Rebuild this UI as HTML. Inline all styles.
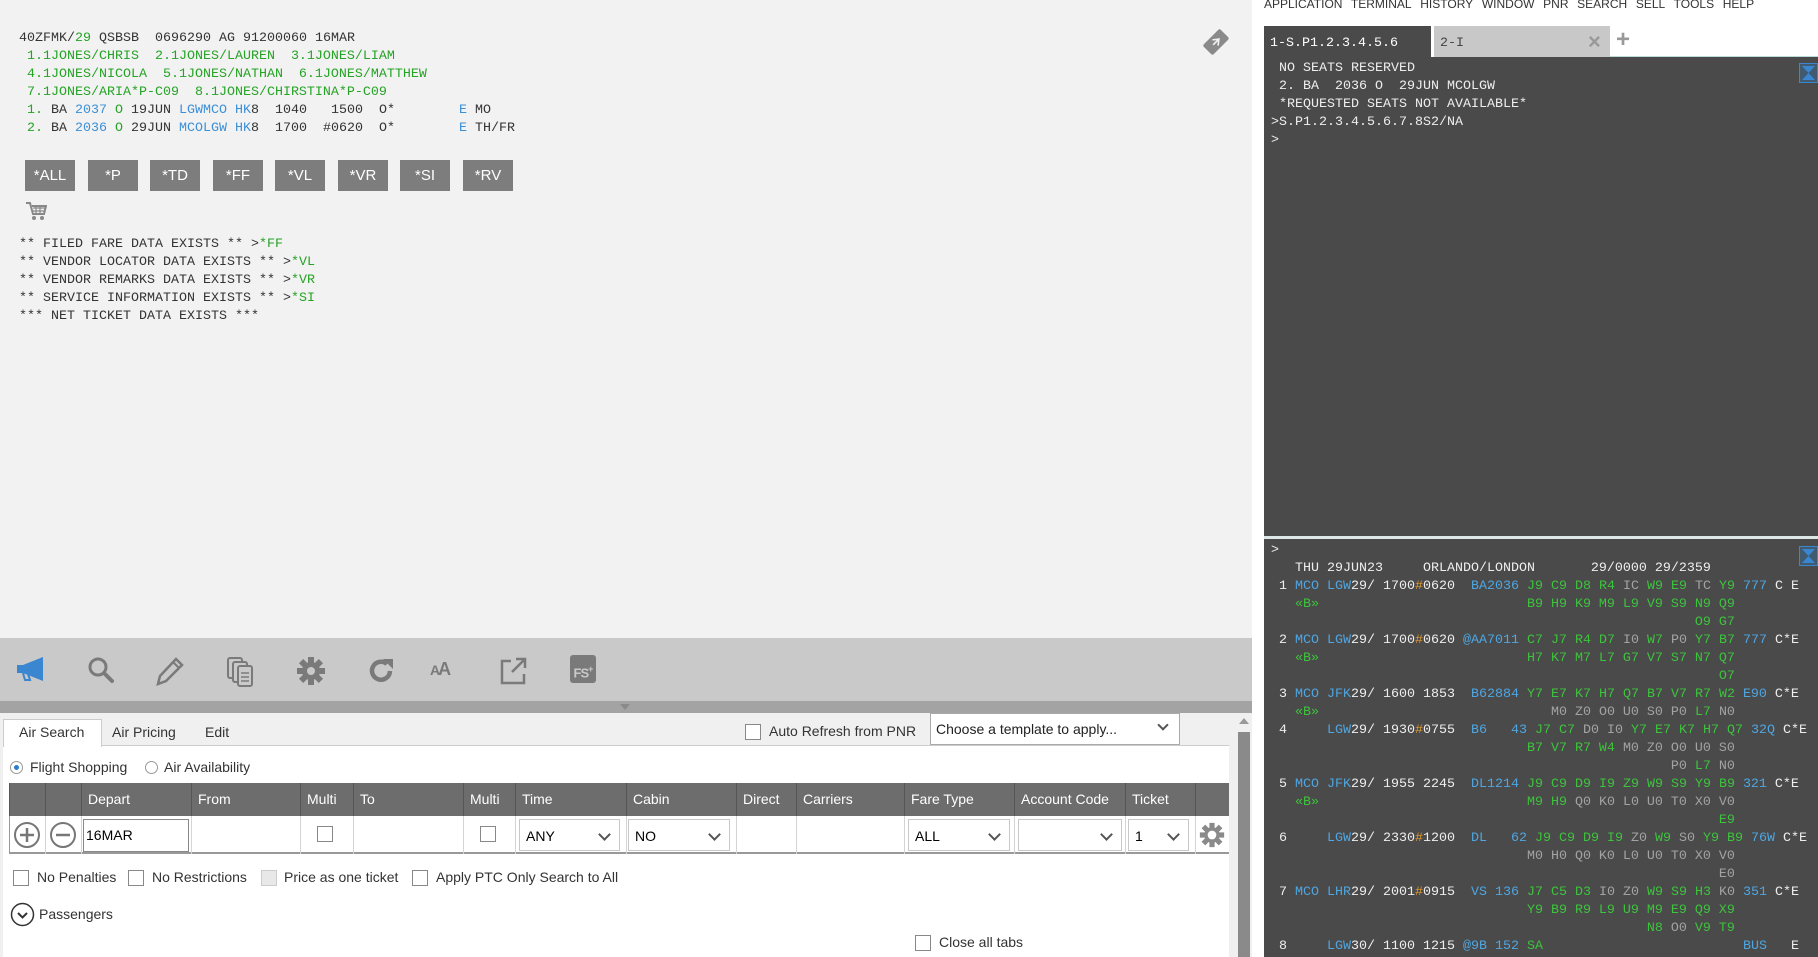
<!DOCTYPE html>
<html><head><meta charset="utf-8"><style>
*{margin:0;padding:0;box-sizing:border-box}
body{width:1818px;height:957px;overflow:hidden;background:#fff;position:relative;font-family:"Liberation Sans",sans-serif}
.a{position:absolute}
pre{font-family:"Liberation Mono",monospace;font-size:13.33px;line-height:18px;position:absolute;white-space:pre}
bl{color:#3b8fd6}gr{color:#25a325}gy{color:#9a9a9a}or{color:#e39a2c}
.rt bl{color:#4ea6e2}.rt gr{color:#3cc43c}.rt gy{color:#a3a3a3}
.btn{position:absolute;top:160px;width:50px;height:31px;background:#7d7d7d;color:#fff;font-size:15px;text-align:center;line-height:31px}
.tb{position:absolute;top:656px}
.hc{position:absolute;top:783px;height:33px;background:#6d6d6d;border-left:1px solid #555;color:#fff;font-size:14px;line-height:33px;padding-left:6px}
.rc{position:absolute;top:816px;height:38px;border-left:1px solid #d4d4d4;background:#fff}
.cb{position:absolute;width:16px;height:16px;border:1px solid #888;background:#fff}
.sel{position:absolute;top:819px;height:32px;border:1px solid #c8c8c8;background:#fff;font-size:14px;line-height:32px;padding-left:6px}
.sel:after{content:"";position:absolute;right:10px;top:10px;width:7px;height:7px;border-right:2px solid #555;border-bottom:2px solid #555;transform:rotate(45deg)}
.lbl{position:absolute;font-size:14px;color:#333}
</style></head><body>
<!-- left terminal -->
<div class="a" style="left:0;top:0;width:1252px;height:638px;background:#f2f2f2"></div>
<pre style="left:19px;top:30px;color:#333">40ZFMK/<gr>29</gr> QSBSB  0696290 AG 91200060 16MAR
<gr> 1.1JONES/CHRIS  2.1JONES/LAUREN  3.1JONES/LIAM</gr>
<gr> 4.1JONES/NICOLA  5.1JONES/NATHAN  6.1JONES/MATTHEW</gr>
<gr> 7.1JONES/ARIA*P-C09  8.1JONES/CHIRSTINA*P-C09</gr>
<gr> 1.</gr> BA <bl>2037</bl> <gr>O</gr> 19JUN <bl>LGWMCO</bl> <bl>HK</bl>8  1040   1500  O*        <bl>E</bl> MO
<gr> 2.</gr> BA <bl>2036</bl> <gr>O</gr> 29JUN <bl>MCOLGW</bl> <bl>HK</bl>8  1700  #0620  O*        <bl>E</bl> TH/FR</pre>
<div class="btn" style="left:25px">*ALL</div><div class="btn" style="left:88px">*P</div><div class="btn" style="left:150px">*TD</div><div class="btn" style="left:213px">*FF</div><div class="btn" style="left:275px">*VL</div><div class="btn" style="left:338px">*VR</div><div class="btn" style="left:400px">*SI</div><div class="btn" style="left:463px">*RV</div>
<svg class="a" style="left:25px;top:201px" width="22" height="21" viewBox="0 0 22 21"><path d="M1 2h4l3 11h11l2-8H7" fill="none" stroke="#888" stroke-width="2"/><path d="M8 7h12M8 10h11M11 5v8M15 5v8" stroke="#888" stroke-width="1.2"/><circle cx="9" cy="17" r="2" fill="#888"/><circle cx="17" cy="17" r="2" fill="#888"/></svg>
<pre style="left:19px;top:236px;color:#333">** FILED FARE DATA EXISTS ** &gt;<gr>*FF</gr>
** VENDOR LOCATOR DATA EXISTS ** &gt;<gr>*VL</gr>
** VENDOR REMARKS DATA EXISTS ** &gt;<gr>*VR</gr>
** SERVICE INFORMATION EXISTS ** &gt;<gr>*SI</gr>
*** NET TICKET DATA EXISTS ***</pre>
<svg class="a" style="left:1200px;top:26px" width="32" height="32" viewBox="0 0 32 32"><g transform="rotate(-45 16 16)"><rect x="4" y="9" width="24" height="14" rx="2" fill="#8a8a8a"/><path d="M15 12l5 4-5 4M12 16h9" stroke="#f2f2f2" stroke-width="1.6" fill="none"/></g></svg>

<!-- toolbar -->
<div class="a" style="left:0;top:638px;width:1252px;height:63px;background:#c9c9c9"></div>
<div class="a" style="left:0;top:701px;width:1252px;height:12px;background:#a3a3a3"></div>
<div class="a" style="left:620px;top:704px;width:0;height:0;border-left:5px solid transparent;border-right:5px solid transparent;border-top:6px solid #8a8a8a"></div>
<svg class="tb" style="left:15px" width="32" height="28" viewBox="0 0 32 28"><path d="M2 9h6l20-8v24L8 17H2z" fill="#3a86d0"/><path d="M8 17l2 7h5l-2-6" fill="none" stroke="#3a86d0" stroke-width="2"/></svg>
<svg class="tb" style="left:86px" width="30" height="30" viewBox="0 0 30 30"><circle cx="12" cy="11" r="8" fill="none" stroke="#7a7a7a" stroke-width="3"/><path d="M18 17l8 8" stroke="#7a7a7a" stroke-width="4" stroke-linecap="round"/></svg>
<svg class="tb" style="left:156px" width="30" height="30" viewBox="0 0 30 30"><path d="M20 3l6 6L10 25l-8 3 2-8z" fill="none" stroke="#7a7a7a" stroke-width="2.5"/><path d="M17 6l6 6" stroke="#7a7a7a" stroke-width="2"/></svg>
<svg class="tb" style="left:226px" width="30" height="32" viewBox="0 0 30 32"><rect x="2" y="2" width="14" height="20" rx="2" fill="none" stroke="#7a7a7a" stroke-width="2"/><rect x="7" y="6" width="14" height="20" rx="2" fill="#c9c9c9" stroke="#7a7a7a" stroke-width="2"/><rect x="12" y="10" width="14" height="20" rx="2" fill="#c9c9c9" stroke="#7a7a7a" stroke-width="2"/><path d="M15 17h8M15 21h8M15 25h8" stroke="#7a7a7a" stroke-width="1.6"/></svg>
<svg class="tb" style="left:296px" width="30" height="30" viewBox="0 0 30 30"><g fill="#7a7a7a"><circle cx="15" cy="15" r="9"/><rect x="12" y="1" width="6" height="28"/><rect x="12" y="1" width="6" height="28" transform="rotate(45 15 15)"/><rect x="12" y="1" width="6" height="28" transform="rotate(90 15 15)"/><rect x="12" y="1" width="6" height="28" transform="rotate(135 15 15)"/></g><circle cx="15" cy="15" r="4" fill="#c9c9c9"/></svg>
<svg class="tb" style="left:366px" width="30" height="30" viewBox="0 0 30 30"><path d="M24 15a9 9 0 1 1-3-7" fill="none" stroke="#7a7a7a" stroke-width="4.5"/><path d="M17 3h10v10z" fill="#7a7a7a"/></svg>
<div class="tb" style="left:430px;top:659px;font-size:18px;font-weight:bold;color:#7a7a7a;letter-spacing:-2px"><span style="font-size:14px">A</span>A</div>
<svg class="tb" style="left:498px" width="30" height="30" viewBox="0 0 30 30"><path d="M13 5H4v22h22v-9" fill="none" stroke="#7a7a7a" stroke-width="2.5"/><path d="M14 16L27 3M18 3h9v9" fill="none" stroke="#7a7a7a" stroke-width="2.5"/></svg>
<div class="tb" style="left:570px;top:655px;width:26px;height:28px;background:#7a7a7a;border-radius:3px;color:#c9c9c9;font-size:13px;font-weight:bold;line-height:28px;text-align:center;letter-spacing:-1px">FS<sup style="font-size:9px">+</sup></div>

<!-- form -->
<div class="a" style="left:0;top:713px;width:1252px;height:244px;background:#f0f0f0"></div>
<div class="a" style="left:3px;top:745px;width:1226px;height:212px;background:#fff;border-top:1px solid #ccc"></div>
<div class="a" style="left:3px;top:719px;width:99px;height:28px;background:#fff;border:1px solid #ccc;border-bottom:none"></div>
<div class="lbl" style="left:19px;top:724px">Air Search</div>
<div class="lbl" style="left:112px;top:724px">Air Pricing</div>
<div class="lbl" style="left:205px;top:724px">Edit</div>
<div class="cb" style="left:745px;top:724px"></div>
<div class="lbl" style="left:769px;top:723px">Auto Refresh from PNR</div>
<div class="a" style="left:930px;top:713px;width:250px;height:32px;background:#fff;border:1px solid #aaa;font-size:14px;line-height:30px;padding-left:5px;color:#222">Choose a template to apply...</div>
<div class="a" style="left:1159px;top:721px;width:8px;height:8px;border-right:2px solid #555;border-bottom:2px solid #555;transform:rotate(45deg)"></div>
<div class="a" style="left:1235px;top:713px;width:17px;height:244px;background:#f0f0f0"></div>
<div class="a" style="left:1238px;top:732px;width:12px;height:225px;background:#8a8a8a"></div>
<div class="a" style="left:1239px;top:718px;width:0;height:0;border-left:5px solid transparent;border-right:5px solid transparent;border-bottom:6px solid #999"></div>

<div class="a" style="left:10px;top:761px;width:13px;height:13px;border-radius:50%;border:1px solid #999;background:#fff"><div class="a" style="left:3px;top:3px;width:5px;height:5px;border-radius:50%;background:#2a7fd4"></div></div>
<div class="lbl" style="left:30px;top:759px">Flight Shopping</div>
<div class="a" style="left:145px;top:761px;width:13px;height:13px;border-radius:50%;border:1px solid #999;background:#fff"></div>
<div class="lbl" style="left:164px;top:759px">Air Availability</div>

<div class="hc" style="left:9px;width:36px"></div><div class="hc" style="left:45px;width:36px"></div><div class="hc" style="left:81px;width:110px">Depart</div><div class="hc" style="left:191px;width:109px">From</div><div class="hc" style="left:300px;width:53px">Multi</div><div class="hc" style="left:353px;width:110px">To</div><div class="hc" style="left:463px;width:52px">Multi</div><div class="hc" style="left:515px;width:111px">Time</div><div class="hc" style="left:626px;width:110px">Cabin</div><div class="hc" style="left:736px;width:60px">Direct</div><div class="hc" style="left:796px;width:108px">Carriers</div><div class="hc" style="left:904px;width:110px">Fare Type</div><div class="hc" style="left:1014px;width:111px">Account Code</div><div class="hc" style="left:1125px;width:70px">Ticket</div><div class="hc" style="left:1195px;width:34px"></div>
<div class="a" style="left:9px;top:816px;width:1220px;height:38px;background:#fff;border-bottom:2px solid #999;border-left:1px solid #999"></div>
<div class="rc" style="left:45px;width:1px"></div><div class="rc" style="left:81px;width:1px"></div><div class="rc" style="left:191px;width:1px"></div><div class="rc" style="left:300px;width:1px"></div><div class="rc" style="left:353px;width:1px"></div><div class="rc" style="left:463px;width:1px"></div><div class="rc" style="left:515px;width:1px"></div><div class="rc" style="left:626px;width:1px"></div><div class="rc" style="left:736px;width:1px"></div><div class="rc" style="left:796px;width:1px"></div><div class="rc" style="left:904px;width:1px"></div><div class="rc" style="left:1014px;width:1px"></div><div class="rc" style="left:1125px;width:1px"></div><div class="rc" style="left:1195px;width:1px"></div>
<svg class="a" style="left:13px;top:821px" width="28" height="28" viewBox="0 0 28 28"><circle cx="14" cy="14" r="12" fill="none" stroke="#777" stroke-width="2"/><path d="M14 7v14M7 14h14" stroke="#777" stroke-width="2.5"/></svg>
<svg class="a" style="left:49px;top:821px" width="28" height="28" viewBox="0 0 28 28"><circle cx="14" cy="14" r="12" fill="none" stroke="#777" stroke-width="2"/><path d="M7 14h14" stroke="#777" stroke-width="2.5"/></svg>
<div class="a" style="left:83px;top:819px;width:106px;height:33px;border:1px solid #888;background:#fff;font-size:14px;line-height:31px;padding-left:2px">16MAR</div>
<div class="cb" style="left:317px;top:826px"></div><div class="cb" style="left:480px;top:826px"></div>
<div class="sel" style="left:519px;width:101px">ANY</div>
<div class="sel" style="left:628px;width:102px">NO</div>
<div class="sel" style="left:908px;width:102px">ALL</div>
<div class="sel" style="left:1018px;width:104px"></div>
<div class="sel" style="left:1128px;width:61px">1</div>
<svg class="a" style="left:1199px;top:822px" width="26" height="26" viewBox="0 0 30 30"><g fill="#8a8a8a"><circle cx="15" cy="15" r="9"/><rect x="12" y="1" width="6" height="28"/><rect x="12" y="1" width="6" height="28" transform="rotate(45 15 15)"/><rect x="12" y="1" width="6" height="28" transform="rotate(90 15 15)"/><rect x="12" y="1" width="6" height="28" transform="rotate(135 15 15)"/></g><circle cx="15" cy="15" r="5" fill="#fff"/></svg>

<div class="cb" style="left:13px;top:870px"></div><div class="lbl" style="left:37px;top:869px">No Penalties</div>
<div class="cb" style="left:128px;top:870px"></div><div class="lbl" style="left:152px;top:869px">No Restrictions</div>
<div class="cb" style="left:261px;top:870px;background:#e8e8e8;border-color:#ccc"></div><div class="lbl" style="left:284px;top:869px">Price as one ticket</div>
<div class="cb" style="left:412px;top:870px"></div><div class="lbl" style="left:436px;top:869px">Apply PTC Only Search to All</div>
<svg class="a" style="left:10px;top:902px" width="25" height="25" viewBox="0 0 25 25"><circle cx="12.5" cy="12.5" r="11" fill="none" stroke="#333" stroke-width="1.5"/><path d="M8 11l4.5 4.5L17 11" fill="none" stroke="#333" stroke-width="2"/></svg>
<div class="lbl" style="left:39px;top:906px">Passengers</div>
<div class="cb" style="left:915px;top:935px"></div><div class="lbl" style="left:939px;top:934px">Close all tabs</div>

<!-- right side -->
<div class="a" style="left:1264px;top:-3px;font-size:12px;color:#333;word-spacing:1px">APPLICATION&nbsp; TERMINAL&nbsp; HISTORY&nbsp; WINDOW&nbsp; PNR&nbsp; SEARCH&nbsp; SELL&nbsp; TOOLS&nbsp; HELP</div>
<div class="a" style="left:1264px;top:26px;width:167px;height:31px;background:#4a4a4a"></div>
<pre style="left:1270px;top:35px;color:#fff">1-S.P1.2.3.4.5.6</pre>
<div class="a" style="left:1434px;top:26px;width:176px;height:31px;background:#c8c8c8"></div>
<pre style="left:1440px;top:35px;color:#444">2-I</pre>
<div class="a" style="left:1588px;top:29px;font-size:22px;color:#999;font-weight:bold">×</div>
<div class="a" style="left:1616px;top:26px;font-size:24px;color:#999;font-weight:bold">+</div>
<div class="a" style="left:1610px;top:56px;width:208px;height:2px;background:#b9dcd6"></div>
<div class="a rt" style="left:1264px;top:57px;width:554px;height:479px;background:#4a4a4a"></div>
<pre style="left:1271px;top:60px;color:#eee"> NO SEATS RESERVED
 2. BA  2036 O  29JUN MCOLGW
 *REQUESTED SEATS NOT AVAILABLE*
&gt;S.P1.2.3.4.5.6.7.8S2/NA
&gt;</pre>
<svg class="a" style="left:1799px;top:63px" width="19" height="20" viewBox="0 0 19 20"><rect x="0.5" y="0.5" width="18" height="19" fill="#405a70" stroke="#3a86d0"/><path d="M3 3h13l-6.5 7zM3 17h13l-6.5-7z" fill="#3a86d0"/></svg>
<div class="a" style="left:1264px;top:536px;width:554px;height:3px;background:#dde8e6"></div>
<div class="a" style="left:1264px;top:539px;width:554px;height:418px;background:#4a4a4a"></div>
<svg class="a" style="left:1799px;top:546px" width="19" height="20" viewBox="0 0 19 20"><rect x="0.5" y="0.5" width="18" height="19" fill="#405a70" stroke="#3a86d0"/><path d="M3 3h13l-6.5 7zM3 17h13l-6.5-7z" fill="#3a86d0"/></svg>
<pre class="rt" style="left:1271px;top:542px;color:#eee">&gt;
   THU 29JUN23     ORLANDO/LONDON       29/0000 29/2359
 1 <bl>MCO</bl> <bl>LGW</bl>29/ 1700<or>#</or>0620  <bl>BA2036</bl> <gr>J9 C9 D8 R4</gr> <gy>IC</gy> <gr>W9 E9</gr> <gy>TC</gy> <gr>Y9</gr> <bl>777</bl> C E
   <gr>«B»</gr>                          <gr>B9 H9 K9 M9 L9 V9 S9 N9 Q9</gr>
                                                     <gr>O9 G7</gr>
 2 <bl>MCO</bl> <bl>LGW</bl>29/ 1700<or>#</or>0620 <bl>@AA7011</bl> <gr>C7 J7 R4 D7</gr> <gy>I0</gy> <gr>W7</gr> <gy>P0</gy> <gr>Y7 B7</gr> <bl>777</bl> C*E
   <gr>«B»</gr>                          <gr>H7 K7 M7 L7 G7 V7 S7 N7 Q7</gr>
                                                        <gr>O7</gr>
 3 <bl>MCO</bl> <bl>JFK</bl>29/ 1600 1853  <bl>B62884</bl> <gr>Y7 E7 K7 H7 Q7 B7 V7 R7 W2</gr> <bl>E90</bl> C*E
   <gr>«B»</gr>                             <gy>M0 Z0 O0 U0 S0 P0</gy> <gr>L7</gr> <gy>N0</gy>
 4     <bl>LGW</bl>29/ 1930<or>#</or>0755  <bl>B6   43</bl> <gr>J7 C7</gr> <gy>D0 I0</gy> <gr>Y7 E7 K7 H7 Q7</gr> <bl>32Q</bl> C*E
                                <gr>B7 V7 R7 W4</gr> <gy>M0 Z0 O0 U0 S0</gy>
                                                  <gy>P0</gy> <gr>L7</gr> <gy>N0</gy>
 5 <bl>MCO</bl> <bl>JFK</bl>29/ 1955 2245  <bl>DL1214</bl> <gr>J9 C9 D9 I9 Z9 W9 S9 Y9 B9</gr> <bl>321</bl> C*E
   <gr>«B»</gr>                          <gr>M9 H9</gr> <gy>Q0 K0 L0 U0 T0 X0 V0</gy>
                                                        <gr>E9</gr>
 6     <bl>LGW</bl>29/ 2330<or>#</or>1200  <bl>DL   62</bl> <gr>J9 C9 D9 I9</gr> <gy>Z0</gy> <gr>W9</gr> <gy>S0</gy> <gr>Y9 B9</gr> <bl>76W</bl> C*E
                                <gy>M0 H0 Q0 K0 L0 U0 T0 X0 V0</gy>
                                                        <gy>E0</gy>
 7 <bl>MCO</bl> <bl>LHR</bl>29/ 2001<or>#</or>0915  <bl>VS 136</bl> <gr>J7 C5 D3</gr> <gy>I0 Z0</gy> <gr>W9 S9 H3</gr> <gy>K0</gy> <bl>351</bl> C*E
                                <gr>Y9 B9 R9 L9 U9 M9 E9 Q9 X9</gr>
                                               <gr>N8</gr> <gy>O0</gy> <gr>V9 T9</gr>
 8     <bl>LGW</bl>30/ 1100 1215 <bl>@9B 152</bl> <gr>SA</gr>                         <bl>BUS</bl>   E</pre>
</body></html>
